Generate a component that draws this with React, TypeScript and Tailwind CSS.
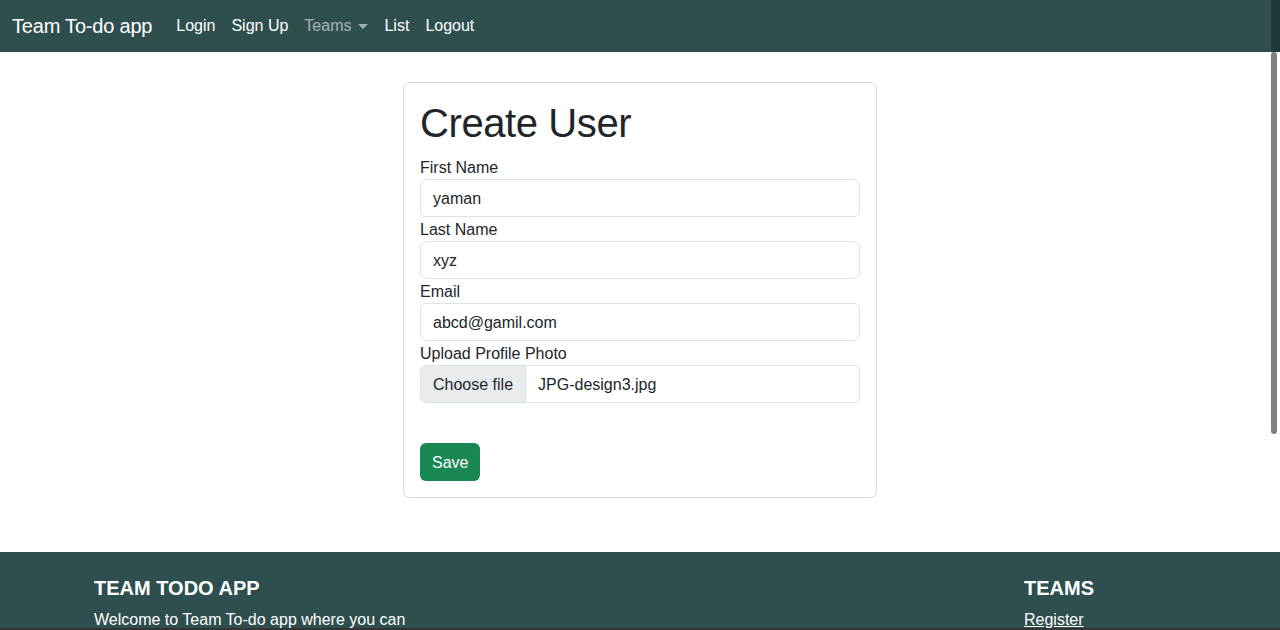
const navLinks = ["Login", "Sign Up", "Teams", "List", "Logout"];

const fields = [
  { label: "First Name", value: "yaman" },
  { label: "Last Name", value: "xyz" },
  { label: "Email", value: "abcd@gamil.com" },
];

const App = () => {
  return (
    <div
      className="relative h-[630px] overflow-hidden bg-white text-[#212529] text-base leading-6"
      style={{ fontFamily: '"Liberation Sans", Arial, sans-serif' }}
    >
      <nav className="flex items-center h-[52px] bg-[#2f4f4f] px-3">
        <span className="text-white text-[20px] leading-[30px] mr-4 tracking-[-0.2px]">Team To-do app</span>
        <ul className="flex items-center">
          {navLinks.map((link) => (
            <li
              key={link}
              className={`px-2 flex items-center ${
                link === "Teams" ? "text-white/55" : "text-white"
              }`}
            >
              {link}
              {link === "Teams" && (
                <span className="ml-[7px] mt-[1px] w-0 h-0 border-x-[5px] border-x-transparent border-t-[5px] border-t-white/55" />
              )}
            </li>
          ))}
        </ul>
      </nav>

      <main className="flex justify-center pt-[30px] pb-[54px]">
        <div className="w-[474px] border border-black/15 rounded-md p-4">
          <h1 className="text-[40px] leading-[48px] font-medium mb-2 tracking-[-0.4px]">Create User</h1>
          <form>
            {fields.map((f) => (
              <div key={f.label}>
                <label className="block pt-[1px] h-6">{f.label}</label>
                <div className="h-[38px] border border-[#dee2e6] rounded-md px-3 pt-[1px] flex items-center">
                  {f.value}
                </div>
              </div>
            ))}
            <label className="block pt-[1px] h-6">Upload Profile Photo</label>
            <div className="h-[38px] border border-[#dee2e6] rounded-md flex items-stretch overflow-hidden">
              <span className="bg-[#e9ecef] px-3 pt-[1px] flex items-center border-r border-[#dee2e6]">
                Choose file
              </span>
              <span className="px-3 pt-[1px] flex items-center">JPG-design3.jpg</span>
            </div>
            <div className="h-[40px]" />
            <button
              type="button"
              className="h-[38px] px-3 pt-[1px] bg-[#198754] text-white rounded-md"
            >
              Save
            </button>
          </form>
        </div>
      </main>

      <footer className="bg-[#2f4f4f] text-white pt-6 pb-8">
        <div className="w-[1140px] mx-auto px-6 flex">
          <div className="flex-1">
            <h5 className="text-[20px] leading-6 font-bold mb-2">TEAM TODO APP</h5>
            <p>Welcome to Team To-do app where you can</p>
            <p>manage your team's tasks.</p>
          </div>
          <div className="w-[162px]">
            <h5 className="text-[20px] leading-6 font-bold mb-2">TEAMS</h5>
            <p className="underline">Register</p>
            <p className="underline">List</p>
          </div>
        </div>
      </footer>

      {/* overlay scrollbar */}
      <div className="absolute top-0 right-0 w-[9px] h-[52px] bg-[#1f3737]" />
      <div className="absolute top-[52px] right-[3px] w-[6px] h-[382px] rounded-full bg-[#7f7f7f]" />
      <div className="absolute bottom-0 left-0 right-0 h-[2px] bg-[#333]" />
    </div>
  );
};

export default App;
